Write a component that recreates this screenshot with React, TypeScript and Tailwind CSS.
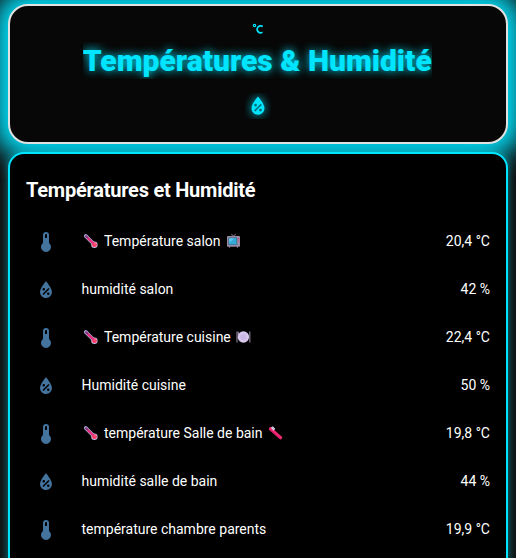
import type { ReactNode } from "react";

const THERMOMETER =
  "M15 13V5A3 3 0 0 0 9 5V13A5 5 0 1 0 15 13M12 4A1 1 0 0 1 13 5V8H11V5A1 1 0 0 1 12 4Z";
const WATER_PERCENT =
  "M12,3.25C12,3.25 6,10 6,14C6,17.32 8.69,20 12,20A6,6 0 0,0 18,14C18,10 12,3.25 12,3.25M14.47,9.97L15.53,11.03L9.53,17.03L8.47,15.97M9.75,10A1.25,1.25 0 0,1 11,11.25A1.25,1.25 0 0,1 9.75,12.5A1.25,1.25 0 0,1 8.5,11.25A1.25,1.25 0 0,1 9.75,10M14.25,14.5A1.25,1.25 0 0,1 15.5,15.75A1.25,1.25 0 0,1 14.25,17A1.25,1.25 0 0,1 13,15.75A1.25,1.25 0 0,1 14.25,14.5Z";
const CELSIUS =
  "M16.5,5C18.05,5 19.5,5.47 20.69,6.28L19.53,9.17C18.73,8.44 17.67,8 16.5,8C14,8 12,10 12,12.5C12,15 14,17 16.5,17C17.53,17 18.47,16.66 19.23,16.08L20.37,18.93C19.24,19.61 17.92,20 16.5,20A7.5,7.5 0 0,1 9,12.5A7.5,7.5 0 0,1 16.5,5M6,3A3,3 0 0,1 9,6A3,3 0 0,1 6,9A3,3 0 0,1 3,6A3,3 0 0,1 6,3M6,5A1,1 0 0,0 5,6A1,1 0 0,0 6,7A1,1 0 0,0 7,6A1,1 0 0,0 6,5Z";

function Icon({ path, className }: { path: string; className: string }) {
  return (
    <svg viewBox="0 0 24 24" className={className} fill="currentColor" aria-hidden>
      <path d={path} />
    </svg>
  );
}

function Emoji({ children }: { children: ReactNode }) {
  return (
    <svg viewBox="0 0 16 16" className="h-4 w-4 shrink-0" aria-hidden>
      {children}
    </svg>
  );
}

function ThermoEmoji() {
  return (
    <Emoji>
      <path d="M3.8 3L11.8 11" stroke="#b3b7df" strokeWidth="3.8" strokeLinecap="round" />
      <circle cx="12.4" cy="11.7" r="3.2" fill="#c3bddf" />
      <path d="M4 3.2L11.3 10.5" stroke="#8c2f80" strokeWidth="2.2" strokeLinecap="round" />
      <path d="M5.8 5L12 11" stroke="#ee2c78" strokeWidth="1.9" />
      <circle cx="12.5" cy="11.7" r="2.4" fill="#fb3867" />
      <circle cx="13" cy="10.8" r=".7" fill="#ff829b" />
    </Emoji>
  );
}

function TvEmoji() {
  return (
    <Emoji>
      <path d="M5.3 1.2L7.4 3.2L9.8 1.2M3.5 13v2M11.5 13v2" stroke="#685d70" strokeWidth="1.1" fill="none" />
      <rect x="1" y="3" width="13" height="10.8" rx=".8" fill="#9b8ca5" />
      <rect x="2.4" y="4.4" width="8.8" height="7.6" rx=".7" fill="#37586f" />
      <rect x="3" y="5" width="7.6" height="6.4" rx=".5" fill="#35a8d8" />
      <path d="M3.4 5.4h4.6L3.4 9.5z" fill="#67c8ef" />
      <circle cx="12.6" cy="5.8" r=".7" fill="#d33c68" />
      <path d="M12.6 7v2" stroke="#ba6689" />
    </Emoji>
  );
}

function PlateEmoji() {
  return (
    <Emoji>
      <path d="M1 2.5v11M13.8 2.5v11M2.4 2.8v3" stroke="#81788f" strokeWidth="1.2" />
      <circle cx="7.4" cy="8" r="5.7" fill="#d8c8ec" />
      <circle cx="7.4" cy="8" r="3.9" fill="#cbb8e6" stroke="#e4d8f3" strokeWidth=".5" />
    </Emoji>
  );
}

function BrushEmoji() {
  return (
    <Emoji>
      <path d="M2.4 3.8L12.6 12.8" stroke="#f42771" strokeWidth="3.2" strokeLinecap="round" />
      <path d="M2.4 4.8L12 13.3" stroke="#c91b69" strokeWidth=".9" />
      <path d="M2.8 2.7L4.8 1.2L7.2 3.8L5.6 5.7Z" fill="#d9d4e5" />
      <path d="M4 2L6.5 4.7" stroke="#aaa9c5" strokeWidth=".6" />
    </Emoji>
  );
}

type Row = {
  kind: "temp" | "hum";
  label: string;
  value: string;
  before?: ReactNode;
  after?: ReactNode;
};

const rows: Row[] = [
  { kind: "temp", label: "Température salon", value: "20,4 °C", before: <ThermoEmoji />, after: <TvEmoji /> },
  { kind: "hum", label: "humidité salon", value: "42 %" },
  { kind: "temp", label: "Température cuisine", value: "22,4 °C", before: <ThermoEmoji />, after: <PlateEmoji /> },
  { kind: "hum", label: "Humidité cuisine", value: "50 %" },
  { kind: "temp", label: "température Salle de bain", value: "19,8 °C", before: <ThermoEmoji />, after: <BrushEmoji /> },
  { kind: "hum", label: "humidité salle de bain", value: "44 %" },
  { kind: "temp", label: "température chambre parents", value: "19,9 °C" },
];

export default function App() {
  return (
    <main className="flex h-[558px] w-full flex-col gap-2 overflow-hidden bg-[#111] px-2 pt-1 font-['Roboto',sans-serif] text-white">
      <header className="flex h-[140px] shrink-0 flex-col items-center rounded-[20px] border-2 border-[#e1e1e1] bg-[#070707] pt-4 text-[#00e5ff] shadow-[0_0_24px_14px_rgba(0,229,255,0.95)]">
        <Icon path={CELSIUS} className="h-3.5 w-3.5" />
        <h1 className="mt-1.5 mr-[1.5px] h-[37px] overflow-hidden text-[30px] leading-[37px] font-black whitespace-nowrap [text-shadow:0_0_10px_#00e5ff]">
          Températures &amp; Humidité
        </h1>
        <div className="mt-3.5 h-[26px] w-[26px] overflow-hidden">
          <Icon path={WATER_PERCENT} className="h-[26px] w-[26px] drop-shadow-[0_0_5px_#00e5ff]" />
        </div>
      </header>
      <section className="h-[440px] shrink-0 rounded-t-[16px] border-2 border-[#00e5ff] bg-black px-4 shadow-[0_0_10px_rgba(0,229,255,0.5)]">
        <h2 className="mt-6 mb-[15px] h-6 text-[20px] leading-6 font-bold tracking-[-0.24px]">
          Températures et Humidité
        </h2>
        <ul>
          {rows.map((row) => (
            <li key={row.label} className="flex h-12 items-center text-sm leading-5">
              <div className="flex h-full w-10 shrink-0 justify-center pt-[13px] text-[#44739e]">
                <Icon path={row.kind === "temp" ? THERMOMETER : WATER_PERCENT} className="h-6 w-6" />
              </div>
              <div className="ml-[15.5px] flex flex-1 items-center gap-[5.5px] whitespace-nowrap">
                {row.before}
                <span className={row.before ? "ml-px" : ""}>{row.label}</span>
                {row.after}
              </div>
              <span className="whitespace-nowrap">{row.value}</span>
            </li>
          ))}
        </ul>
      </section>
    </main>
  );
}
